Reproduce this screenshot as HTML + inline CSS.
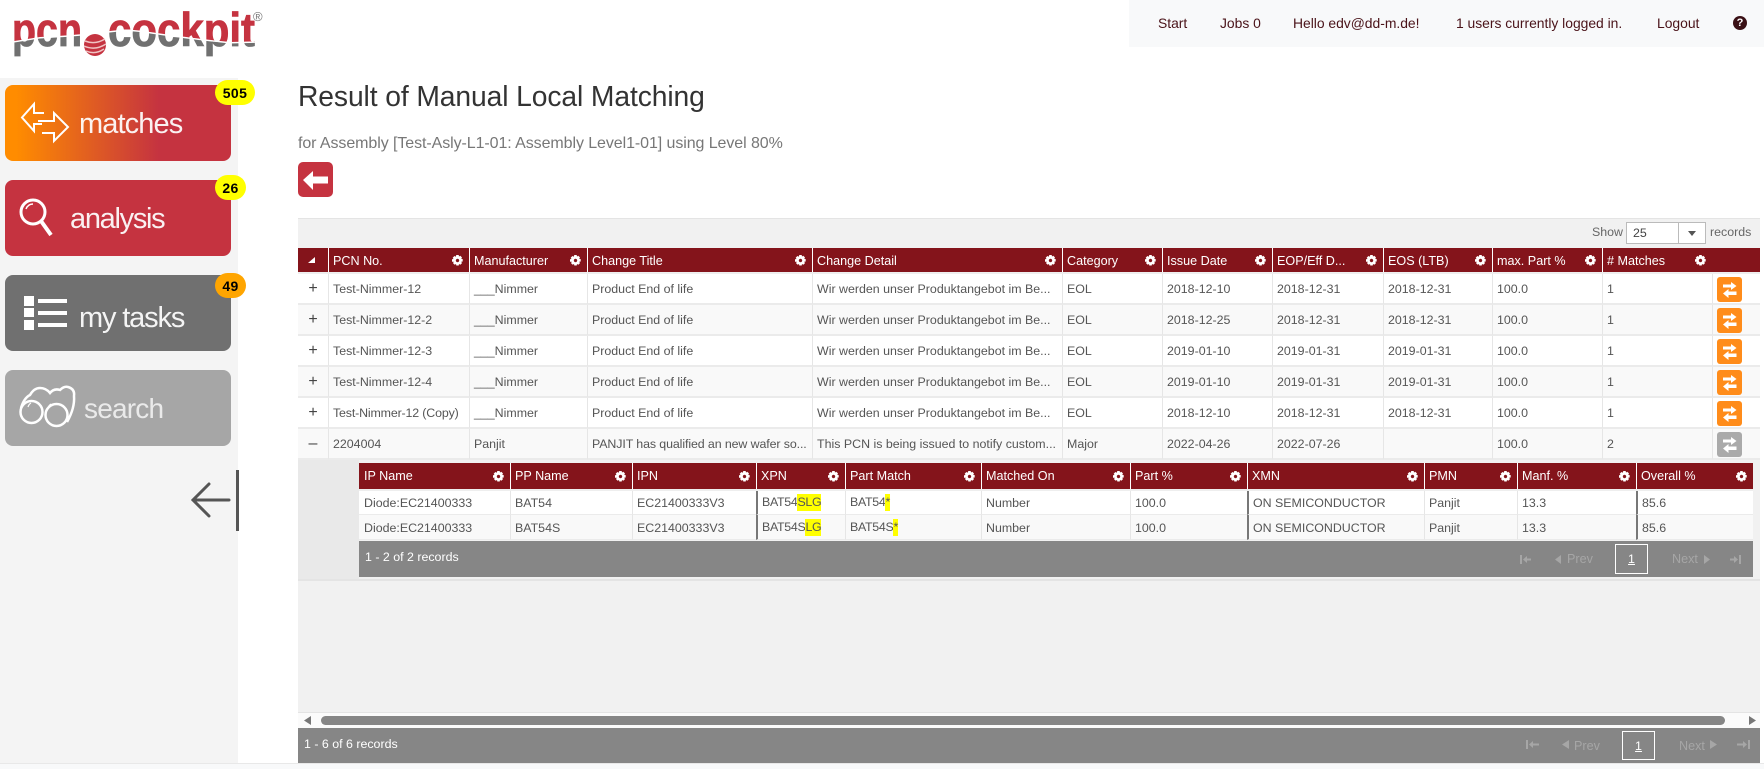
<!DOCTYPE html>
<html><head><meta charset="utf-8"><title>Result of Manual Local Matching</title>
<style>
*{box-sizing:border-box}
html,body{margin:0;padding:0;width:1764px;height:769px;overflow:hidden;background:#fff;font-family:"Liberation Sans",sans-serif;font-size:12.4px;color:#555}
.a{position:absolute}
.nav{top:0;left:1129px;width:635px;height:47px;background:#f8f9fa}
.nl{top:15px;font-size:13.9px;line-height:16px;color:#4a1319;white-space:nowrap;letter-spacing:-.02px}
.side{left:0;top:78px;width:238px;height:685px;background:#f4f4f4}
.btn{left:5px;width:226px;height:76px;border-radius:8px}
.bt{color:#fff;white-space:nowrap;line-height:36px;font-size:29px;opacity:.93}
.bd{height:25px;border-radius:13px;background:#ff0;color:#000;font-weight:bold;font-size:14px;line-height:27px;text-align:center;letter-spacing:.4px}
table{position:absolute;border-collapse:separate;border-spacing:0;table-layout:fixed}
th{background:#84141b;color:#fff;font-weight:normal;text-align:left;padding:0 0 0 4px;border-left:1px solid #fff;position:relative;white-space:nowrap;overflow:hidden;font-size:12.6px}
th:first-child{border-left:0}
td{padding:0 0 0 4px;border-left:1px solid #e6e6e6;border-bottom:2px solid #ebebeb;white-space:nowrap;overflow:hidden;position:relative}
td:first-child{border-left:0}
.i th:first-child,.i td:first-child{padding-left:5px}
.m th{height:24px;padding-top:1px}
.m td{height:31px;background:#fff}
.m tr.e td{background:#f9f9f9}
.m tr.p td{padding-top:1px}
.m td.x{text-align:center;padding:0;font-size:16px;color:#444}
.i th{height:26px}
.i td{height:24px;background:#fff;border-bottom-width:1px}
.i td.s{height:25px}
.i tr.e td{background:#f9f9f9;padding-top:1px}
.i td.g{border-left:2px solid #777;padding-left:4px}
.g2{position:absolute;right:6px;top:50%;margin-top:-5.5px;width:11px;height:11px;display:block}
.sw{position:absolute;left:4px;top:3px;width:25px;height:25px;display:block}
.y{background:#ff0;display:inline-block;line-height:17px}
.t{letter-spacing:-.3px}
.pg{color:#a6a6a6;white-space:nowrap;font-size:12.6px;font-weight:normal}
</style></head><body>
<svg width="0" height="0" style="position:absolute">
<defs>
<symbol id="g" viewBox="0 0 11 11"><path fill="#fff" fill-rule="evenodd" d="M4.3 0h2.4l.3 1.5 1.3-.7 1.7 1.7-.8 1.3 1.5.3v2.4l-1.5.3.8 1.3-1.7 1.7-1.3-.8-.3 1.5H4.300l-.3-1.5-1.300.8-1.700-1.700.8-1.300L0 6.700V4.300l1.500-.3-.8-1.300 1.700-1.700 1.300.7zM5.500 3.800a1.700 1.700 0 1 0 .01 0z"/></symbol>
<symbol id="s" viewBox="0 0 25 25"><rect width="25" height="25" rx="3" fill="currentColor"/><path fill="#fff" d="M6 7.500h8V5l5.500 4-5.500 4v-2.500H6zM19.500 14.500h-8V12L6 16.500l5.500 4.500v-3h8z"/></symbol>
<clipPath id="ct"><path d="M0 0H260V33L222 34Q182 30 142 24Q120 20 102 23Q72 27 32 29L0 34Z"/></clipPath>
<clipPath id="cb"><path d="M0 60H260V34.500L222 35.500Q182 31.500 142 25.500Q120 21.500 102 24.500Q72 28.500 32 30.500L0 35.500Z"/></clipPath>
</defs></svg>

<svg class="a" style="left:8px;top:8px" width="260" height="56" viewBox="0 0 260 56">
<g clip-path="url(#ct)" fill="#c53340" stroke="#c53340" stroke-width=".8" font-family="Liberation Sans" font-weight="bold" font-size="47">
<text x="4" y="38" textLength="70" lengthAdjust="spacingAndGlyphs">pcn</text>
<text x="100" y="38" textLength="147" lengthAdjust="spacingAndGlyphs">cockpit</text>
</g>
<g clip-path="url(#cb)" fill="#707070" stroke="#707070" stroke-width=".8" font-family="Liberation Sans" font-weight="bold" font-size="47">
<text x="4" y="38" textLength="70" lengthAdjust="spacingAndGlyphs">pcn</text>
<text x="100" y="38" textLength="147" lengthAdjust="spacingAndGlyphs">cockpit</text>
</g>
<circle cx="87" cy="37" r="11" fill="#c53340"/>
<path d="M77 33q10 4 20-2M76 38q11 5 22-2M78 43q9 4 18-2" stroke="#f0c4c4" stroke-width="1.500" fill="none"/>
<text x="245" y="13" font-family="Liberation Sans" font-size="13" fill="#777">®</text>
</svg>

<div class="a nav"></div>
<div class="a nl" style="left:1158px">Start</div>
<div class="a nl" style="left:1220px">Jobs 0</div>
<div class="a nl" style="left:1293px">Hello edv@dd-m.de!</div>
<div class="a nl" style="left:1456px">1 users currently logged in.</div>
<div class="a nl" style="left:1657px">Logout</div>
<div class="a" style="left:1733px;top:16px;width:14px;height:14px;border-radius:50%;background:#3a1015;color:#fff;font-size:11px;font-weight:bold;line-height:14px;text-align:center">?</div>

<div class="a side"></div>
<div class="a btn" style="top:85px;background:linear-gradient(90deg,#ff8c00 0,#ff8c00 5%,#c53340 68%,#c53340 100%)"></div>
<div class="a btn" style="top:180px;background:#c53340"></div>
<div class="a btn" style="top:275px;background:#707070"></div>
<div class="a btn" style="top:370px;background:#a6a6a6"></div>

<svg class="a" style="left:0;top:78px" width="244" height="460" viewBox="0 78 244 460" fill="none" stroke="#fff">
<path stroke-width="2" d="M44 113H34V104L22 117.500 34 131V124H42M38 121H54V113L68 127 54 141V133H42"/>
<circle cx="33" cy="212" r="12" stroke-width="3"/><path stroke-width="4" d="M41 221L51 235"/>
<path stroke-width="1.500" d="M26 209q2-5 7-5"/>
<g fill="#fff" stroke="none"><rect x="24" y="296" width="10" height="10"/><rect x="24" y="308" width="10" height="9"/><rect x="24" y="320" width="10" height="10"/><rect x="38" y="299" width="29" height="4"/><rect x="38" y="311" width="29" height="4"/><rect x="38" y="323" width="29" height="4"/></g>
<g stroke-width="2.500"><circle cx="31.500" cy="412" r="11"/><circle cx="56.500" cy="415" r="11"/>
<path d="M21 408Q24 398 30 395Q34 388 40 388Q46 388 50 393Q54 388 60 390Q64 386 68 387Q75 389 74 396Q75 408 67 422"/></g>
<path stroke-width="1.200" d="M28 407q1-3 3-4M48 408q1-3 3-4"/>
<path stroke="#555" stroke-width="3" stroke-linecap="round" d="M229 500H193M209 484L193 500 209 516"/>
<path stroke="#555" stroke-width="3" d="M237.500 470V531"/>
</svg>

<div class="a bt" style="left:79px;top:106px;letter-spacing:-.9px">matches</div>
<div class="a bt" style="left:70px;top:201px;letter-spacing:-1.300px">analysis</div>
<div class="a bt" style="left:79px;top:300px;letter-spacing:-1.150px">my tasks</div>
<div class="a bt" style="left:84px;top:391px;color:#f0f0f0;font-size:28px;letter-spacing:-.8px">search</div>

<div class="a bd" style="left:215px;top:80px;width:40px">505</div>
<div class="a bd" style="left:215px;top:175px;width:31px">26</div>
<div class="a bd" style="left:215px;top:273px;width:31px;background:#ffa500">49</div>

<div class="a" style="left:298px;top:78px;font-size:28.250px;line-height:36px;color:#333;white-space:nowrap;letter-spacing:-.1px">Result of Manual Local Matching</div>
<div class="a" style="left:298px;top:134px;font-size:16px;line-height:20px;color:#777;white-space:nowrap;letter-spacing:-.08px">for Assembly [Test-Asly-L1-01: Assembly Level1-01] using Level 80%</div>
<svg class="a" style="left:298px;top:162px" width="35" height="35" viewBox="0 0 35 35"><rect width="35" height="35" rx="5" fill="#c53340"/><path fill="#fff" d="M5 18L15 9v5.500H30v7H15V28z"/></svg>

<div class="a" style="left:298px;top:218px;width:1462px;height:494px;background:#f1f1f1;border-top:1px solid #e4e4e4"></div>
<div class="a" style="left:1592px;top:223px;line-height:18px;color:#666">Show</div>
<div class="a" style="left:1626px;top:222px;width:80px;height:22px;background:#fff;border:1px solid #bbb;line-height:20px;padding-left:6px;color:#444">25</div>
<div class="a" style="left:1678px;top:222px;width:1px;height:22px;background:#bbb"></div>
<div class="a" style="left:1688px;top:231px;border:4px solid transparent;border-top:5px solid #555;border-bottom:0"></div>
<div class="a" style="left:1710px;top:223px;line-height:18px;color:#666">records</div>

<table class="m" style="left:298px;top:248px;width:1462px;border-top:0">
<colgroup><col style="width:30px"><col style="width:141px"><col style="width:118px"><col style="width:225px"><col style="width:250px"><col style="width:100px"><col style="width:110px"><col style="width:111px"><col style="width:109px"><col style="width:110px"><col style="width:110px"><col style="width:48px"></colgroup>
<thead><tr>
<th style="height:24px;padding:0"><svg class="a" style="left:9px;top:8px" width="9" height="8"><path fill="#fff" d="M8 1v6H1z"/></svg></th>
<th>PCN No.<svg class="g2"><use href="#g"/></svg></th>
<th>Manufacturer<svg class="g2"><use href="#g"/></svg></th>
<th>Change Title<svg class="g2"><use href="#g"/></svg></th>
<th>Change Detail<svg class="g2"><use href="#g"/></svg></th>
<th>Category<svg class="g2"><use href="#g"/></svg></th>
<th>Issue Date<svg class="g2"><use href="#g"/></svg></th>
<th>EOP/Eff D...<svg class="g2"><use href="#g"/></svg></th>
<th>EOS (LTB)<svg class="g2"><use href="#g"/></svg></th>
<th>max. Part %<svg class="g2"><use href="#g"/></svg></th>
<th># Matches<svg class="g2"><use href="#g"/></svg></th>
<th style="border-left:0"></th>
</tr>
<tr><td colspan="12" style="height:2px;padding:0;border:0;background:#eee"></td></tr></thead>
<tbody>
<tr><td class="x">+</td><td>Test-Nimmer-12</td><td>___Nimmer</td><td>Product End of life</td><td>Wir werden unser Produktangebot im Be...</td><td>EOL</td><td>2018-12-10</td><td>2018-12-31</td><td>2018-12-31</td><td>100.0</td><td>1</td><td><svg class="sw" style="color:#ff8c1a"><use href="#s"/></svg></td></tr>
<tr class="e p"><td class="x">+</td><td>Test-Nimmer-12-2</td><td>___Nimmer</td><td>Product End of life</td><td>Wir werden unser Produktangebot im Be...</td><td>EOL</td><td>2018-12-25</td><td>2018-12-31</td><td>2018-12-31</td><td>100.0</td><td>1</td><td><svg class="sw" style="color:#ff8c1a"><use href="#s"/></svg></td></tr>
<tr><td class="x">+</td><td>Test-Nimmer-12-3</td><td>___Nimmer</td><td>Product End of life</td><td>Wir werden unser Produktangebot im Be...</td><td>EOL</td><td>2019-01-10</td><td>2019-01-31</td><td>2019-01-31</td><td>100.0</td><td>1</td><td><svg class="sw" style="color:#ff8c1a"><use href="#s"/></svg></td></tr>
<tr class="e p"><td class="x">+</td><td>Test-Nimmer-12-4</td><td>___Nimmer</td><td>Product End of life</td><td>Wir werden unser Produktangebot im Be...</td><td>EOL</td><td>2019-01-10</td><td>2019-01-31</td><td>2019-01-31</td><td>100.0</td><td>1</td><td><svg class="sw" style="color:#ff8c1a"><use href="#s"/></svg></td></tr>
<tr><td class="x">+</td><td style="letter-spacing:-.15px">Test-Nimmer-12 (Copy)</td><td>___Nimmer</td><td>Product End of life</td><td>Wir werden unser Produktangebot im Be...</td><td>EOL</td><td>2018-12-10</td><td>2018-12-31</td><td>2018-12-31</td><td>100.0</td><td>1</td><td><svg class="sw" style="color:#ff8c1a"><use href="#s"/></svg></td></tr>
<tr class="e"><td class="x">–</td><td>2204004</td><td>Panjit</td><td style="letter-spacing:-.1px">PANJIT has qualified an new wafer so...</td><td>This PCN is being issued to notify custom...</td><td>Major</td><td>2022-04-26</td><td>2022-07-26</td><td></td><td>100.0</td><td>2</td><td><svg class="sw" style="color:#aaa"><use href="#s"/></svg></td></tr>
</tbody></table>

<div class="a" style="left:298px;top:460px;width:61px;height:119px;background:#e9e9e9"></div>
<div class="a" style="left:298px;top:579px;width:1462px;height:2px;background:#e4e4e4"></div>

<table class="i" style="left:359px;top:463px;width:1394px">
<colgroup><col style="width:151px"><col style="width:122px"><col style="width:124px"><col style="width:89px"><col style="width:136px"><col style="width:149px"><col style="width:117px"><col style="width:177px"><col style="width:93px"><col style="width:119px"><col style="width:117px"></colgroup>
<thead><tr>
<th>IP Name<svg class="g2"><use href="#g"/></svg></th>
<th>PP Name<svg class="g2"><use href="#g"/></svg></th>
<th>IPN<svg class="g2"><use href="#g"/></svg></th>
<th>XPN<svg class="g2"><use href="#g"/></svg></th>
<th>Part Match<svg class="g2"><use href="#g"/></svg></th>
<th>Matched On<svg class="g2"><use href="#g"/></svg></th>
<th>Part %<svg class="g2"><use href="#g"/></svg></th>
<th>XMN<svg class="g2"><use href="#g"/></svg></th>
<th>PMN<svg class="g2"><use href="#g"/></svg></th>
<th>Manf. %<svg class="g2"><use href="#g"/></svg></th>
<th>Overall %<svg class="g2"><use href="#g"/></svg></th>
</tr>
<tr><td colspan="11" style="height:2px;padding:0;border:0;background:#eee"></td></tr></thead>
<tbody>
<tr><td>Diode:EC21400333</td><td>BAT54</td><td>EC21400333V3</td><td class="g t">BAT54<span class="y">SLG</span></td><td class="t">BAT54<span class="y">*</span></td><td>Number</td><td>100.0</td><td class="g">ON SEMICONDUCTOR</td><td>Panjit</td><td>13.3</td><td class="g">85.6</td></tr>
<tr class="e"><td class="s">Diode:EC21400333</td><td>BAT54S</td><td>EC21400333V3</td><td class="g t">BAT54S<span class="y">LG</span></td><td class="t">BAT54S<span class="y">*</span></td><td>Number</td><td>100.0</td><td class="g">ON SEMICONDUCTOR</td><td>Panjit</td><td>13.3</td><td class="g">85.6</td></tr>
</tbody></table>

<div class="a" style="left:359px;top:541px;width:1394px;height:36px;background:#868686"></div>
<div class="a" style="left:365px;top:548px;line-height:18px;color:#fff">1 - 2 of 2 records</div>
<svg class="a" style="left:1520px;top:554px" width="222" height="12" fill="#a6a6a6"><path d="M0 1h2v9H0zM3 5.500L7 2v2.500h4v2H7V9zM35 5.500L41 1v9zM218 5.500L214 2v2.500h-4v2h4V9zM219 1h2v9h-2zM184 1l6 4.500-6 4.500z"/></svg>
<div class="a pg" style="left:1567px;top:550px;line-height:18px">Prev</div>
<div class="a pg" style="left:1672px;top:550px;line-height:18px">Next</div>
<div class="a" style="left:1615px;top:544px;width:33px;height:30px;border:1px solid #fff;color:#fff;text-align:center;line-height:29px;text-decoration:underline">1</div>

<div class="a" style="left:298px;top:712px;width:1462px;height:16px;background:#fbfbfb;border-top:1px solid #e4e4e4"></div>
<div class="a" style="left:321px;top:716px;width:1404px;height:9px;border-radius:5px;background:#868686"></div>
<svg class="a" style="left:304px;top:716px" width="1452" height="10" fill="#777"><path d="M7 0v9L0 4.500zM1445 0v9l7-4.500z"/></svg>

<div class="a" style="left:298px;top:728px;width:1462px;height:35px;background:#868686"></div>
<div class="a" style="left:304px;top:735px;line-height:18px;color:#fff">1 - 6 of 6 records</div>
<svg class="a" style="left:1526px;top:739px" width="224" height="12" fill="#a6a6a6"><path d="M0 1h2v9H0zM3 5.500L7 2v2.500h6v2H7V9zM36 5.500L43 1v9zM221 5.500L217 2v2.500h-6v2h6V9zM222 1h2v9h-2zM184 1l7 4.500-7 4.500z"/></svg>
<div class="a pg" style="left:1574px;top:737px;line-height:18px">Prev</div>
<div class="a pg" style="left:1679px;top:737px;line-height:18px">Next</div>
<div class="a" style="left:1622px;top:731px;width:33px;height:29px;border:1px solid #fff;color:#fff;text-align:center;line-height:28px;text-decoration:underline">1</div>

<div class="a" style="left:0;top:763px;width:1764px;height:6px;background:#f8f9fa;border-top:1px solid #e8e8e8"></div>
</body></html>
